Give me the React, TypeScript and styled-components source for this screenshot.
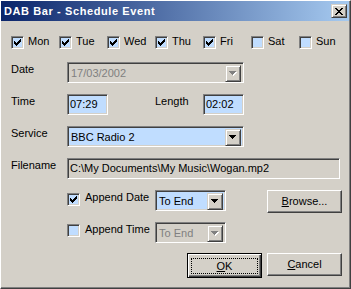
import styled, { createGlobalStyle } from "styled-components";

const GlobalStyle = createGlobalStyle`
  html, body {
    margin: 0;
    padding: 0;
    background: #d4d0c8;
  }
  body {
    font-family: "Liberation Sans", Arial, sans-serif;
    font-size: 11px;
    color: #000;
  }
`

const FIELD_BG = "#c0ddff"

const Window = styled.div`
  width: 351px;
  height: 289px;
  box-sizing: border-box;
  background: #d4d0c8;
  border-left: 1px solid #fff;
  border-top: 1px solid #fff;
  border-right: 1px solid #404040;
  border-bottom: 1px solid #404040;
  box-shadow: inset -1px -1px 0 #808080;
  display: flex;
  flex-direction: column;
`
const TitleBar = styled.div`
  height: 20px;
  margin-right: 1px;
  padding: 0 2px 0 3px;
  display: flex;
  align-items: center;
  justify-content: space-between;
  background: linear-gradient(to right, #0a246a, #a6caf0);
  color: #fff;
  font-weight: bold;
  letter-spacing: 0.6px;
`
const CloseButton = styled.div`
  width: 16px;
  height: 14px;
  box-sizing: border-box;
  background: #d4d0c8;
  border: 1px solid;
  border-color: #d4d0c8 #404040 #404040 #d4d0c8;
  box-shadow: inset 1px 1px 0 #fff, inset -1px -1px 0 #808080;
  display: flex;
  align-items: center;
  justify-content: center;
`
const Body = styled.div`
  display: flex;
  flex-direction: column;
  padding-top: 15px;
`
const DayRow = styled.div`
  display: flex;
  padding-left: 10px;
  height: 13px;
`
const Day = styled.div`
  width: 48px;
  display: flex;
  align-items: flex-start;
  gap: 4px;
`
const Check = styled.div<{ $top?: number }>`
  width: 13px;
  height: 13px;
  flex-shrink: 0;
  box-sizing: border-box;
  margin-top: ${p => `${p.$top ?? 0}px`};
  background: ${FIELD_BG};
  border: 1px solid;
  border-color: #808080 #fff #fff #808080;
  box-shadow: inset 1px 1px 0 #404040, inset -1px -1px 0 #d4d0c8;
  display: flex;
  align-items: center;
  justify-content: center;
`
const Text = styled.span<{ $top?: number }>`
  display: block;
  line-height: 13px;
  white-space: nowrap;
  margin-top: ${p => `${p.$top ?? 0}px`};
`
const Row = styled.div<{ $mt: number; $pl?: number }>`
  display: flex;
  align-items: flex-start;
  height: 21px;
  margin-top: ${p => `${p.$mt}px`};
  padding-left: ${p => `${p.$pl ?? 10}px`};
`
const FieldLabel = styled.span<{ $w: number; $ml?: number }>`
  width: ${p => `${p.$w}px`};
  margin-left: ${p => `${p.$ml ?? 0}px`};
  padding-top: 1px;
  line-height: 13px;
  flex-shrink: 0;
  white-space: nowrap;
`
const sunken = `
  box-sizing: border-box;
  border: 1px solid;
  border-color: #808080 #fff #fff #808080;
  box-shadow: inset 1px 1px 0 #404040, inset -1px -1px 0 #d4d0c8;
`
const Edit = styled.div<{ $w: number; $off?: boolean; $grey?: boolean }>`
  ${sunken}
  width: ${p => `${p.$w}px`};
  height: 21px;
  flex-shrink: 0;
  padding: 1px 0 0 2px;
  line-height: 17px;
  white-space: nowrap;
  overflow: hidden;
  background: ${p => (p.$off ? "#d4d0c8" : FIELD_BG)};
  color: ${p => (p.$grey ? "#808080" : "#000")};
`
const Combo = styled.div<{ $w: number; $off?: boolean }>`
  ${sunken}
  width: ${p => `${p.$w}px`};
  height: 21px;
  flex-shrink: 0;
  padding: 2px;
  display: flex;
  background: ${p => (p.$off ? "#d4d0c8" : FIELD_BG)};
  color: ${p => (p.$off ? "#808080" : "#000")};
`
const ComboText = styled.span`
  flex: 1;
  padding-left: 1px;
  line-height: 17px;
  white-space: nowrap;
  overflow: hidden;
`
const DropButton = styled.div`
  width: 16px;
  height: 17px;
  box-sizing: border-box;
  background: #d4d0c8;
  border: 1px solid;
  border-color: #d4d0c8 #404040 #404040 #d4d0c8;
  box-shadow: inset 1px 1px 0 #fff, inset -1px -1px 0 #808080;
  display: flex;
  align-items: center;
  justify-content: center;
`
const ButtonRow = styled.div`
  display: flex;
  justify-content: flex-end;
  align-items: flex-start;
  gap: 5px;
  margin-top: 10px;
  padding-right: 8px;
`
const Button = styled.div<{ $default?: boolean; $h?: number; $ml?: number }>`
  width: 75px;
  height: ${p => `${p.$h ?? 23}px`};
  margin-left: ${p => `${p.$ml ?? 0}px`};
  flex-shrink: 0;
  box-sizing: border-box;
  background: #d4d0c8;
  border: 1px solid;
  border-color: ${p => (p.$default ? "#000" : "#fff #404040 #404040 #fff")};
  box-shadow: ${p =>
    p.$default
      ? "inset 1px 1px 0 #fff, inset -1px -1px 0 #404040, inset -2px -2px 0 #808080"
      : "inset -1px -1px 0 #808080"};
  padding: ${p => (p.$default ? "4px 3px 3px 3px" : "0")};
  display: flex;
  align-items: center;
  justify-content: center;
  line-height: 13px;
`
const Focus = styled.span`
  flex: 1;
  align-self: stretch;
  border: 1px dotted #000;
  display: flex;
  align-items: center;
  justify-content: center;
`

const CheckMark = () => (
  <svg width="7" height="7" viewBox="0 0 7 7" shapeRendering="crispEdges">
    <path
      fill="#000"
      d="M6 0h1v1h-1z M5 1h2v1h-2z M0 2h1v1h-1z M4 2h3v1h-3z M0 3h2v1h-2z M3 3h3v1h-3z M0 4h5v1h-5z M1 5h3v1h-3z M2 6h1v1h-1z"
    />
  </svg>
)

const Arrow = ({ off }: { off?: boolean }) => (
  <svg width="8" height="5" viewBox="0 0 8 5" shapeRendering="crispEdges">
    {off && <path fill="#fff" d="M1 1h7v1h-7z M2 2h5v1h-5z M3 3h3v1h-3z M4 4h1v1h-1z" />}
    <path
      fill={off ? "#808080" : "#000"}
      d="M0 0h7v1h-7z M1 1h5v1h-5z M2 2h3v1h-3z M3 3h1v1h-1z"
    />
  </svg>
)

const CloseGlyph = () => (
  <svg width="8" height="7" viewBox="0 0 8 7" shapeRendering="crispEdges">
    <path
      fill="#000"
      d="M0 0h2v1h-2z M6 0h2v1h-2z M1 1h2v1h-2z M5 1h2v1h-2z M2 2h4v1h-4z M3 3h2v1h-2z M2 4h4v1h-4z M1 5h2v1h-2z M5 5h2v1h-2z M0 6h2v1h-2z M6 6h2v1h-2z"
    />
  </svg>
)

const days = [
  { name: "Mon", on: true },
  { name: "Tue", on: true },
  { name: "Wed", on: true },
  { name: "Thu", on: true },
  { name: "Fri", on: true },
  { name: "Sat", on: false },
  { name: "Sun", on: false },
]

const App = () => {
  return (
    <>
      <GlobalStyle />
      <Window>
        <TitleBar>
          <span>DAB Bar - Schedule Event</span>
          <CloseButton>
            <CloseGlyph />
          </CloseButton>
        </TitleBar>
        <Body>
          <DayRow>
            {days.map(d => (
              <Day key={d.name}>
                <Check>{d.on && <CheckMark />}</Check>
                <Text $top={-1}>{d.name}</Text>
              </Day>
            ))}
          </DayRow>

          <Row $mt={13}>
            <FieldLabel $w={56}>Date</FieldLabel>
            <Combo $w={177} $off>
              <ComboText>17/03/2002</ComboText>
              <DropButton>
                <Arrow off />
              </DropButton>
            </Combo>
          </Row>

          <Row $mt={11}>
            <FieldLabel $w={56}>Time</FieldLabel>
            <Edit $w={41}>07:29</Edit>
            <FieldLabel $w={48} $ml={47}>Length</FieldLabel>
            <Edit $w={41}>02:02</Edit>
          </Row>

          <Row $mt={11}>
            <FieldLabel $w={56}>Service</FieldLabel>
            <Combo $w={177}>
              <ComboText>BBC Radio 2</ComboText>
              <DropButton>
                <Arrow />
              </DropButton>
            </Combo>
          </Row>

          <Row $mt={11}>
            <FieldLabel $w={56}>Filename</FieldLabel>
            <Edit $w={273} $off>C:\My Documents\My Music\Wogan.mp2</Edit>
          </Row>

          <Row $mt={11} $pl={66}>
            <Check $top={3}>
              <CheckMark />
            </Check>
            <FieldLabel $w={70} $ml={5}>Append Date</FieldLabel>
            <Combo $w={71}>
              <ComboText>To End</ComboText>
              <DropButton>
                <Arrow />
              </DropButton>
            </Combo>
            <Button $ml={41}>
              <span>
                <u>B</u>rowse...
              </span>
            </Button>
          </Row>

          <Row $mt={11} $pl={66}>
            <Check $top={2} />
            <FieldLabel $w={70} $ml={5}>Append Time</FieldLabel>
            <Combo $w={71} $off>
              <ComboText>To End</ComboText>
              <DropButton>
                <Arrow off />
              </DropButton>
            </Combo>
          </Row>

          <ButtonRow>
            <Button $default $h={25}>
              <Focus>
                <span>
                  <u>O</u>K
                </span>
              </Focus>
            </Button>
            <Button>
              <span>
                <u>C</u>ancel
              </span>
            </Button>
          </ButtonRow>
        </Body>
      </Window>
    </>
  )
}

export default App
